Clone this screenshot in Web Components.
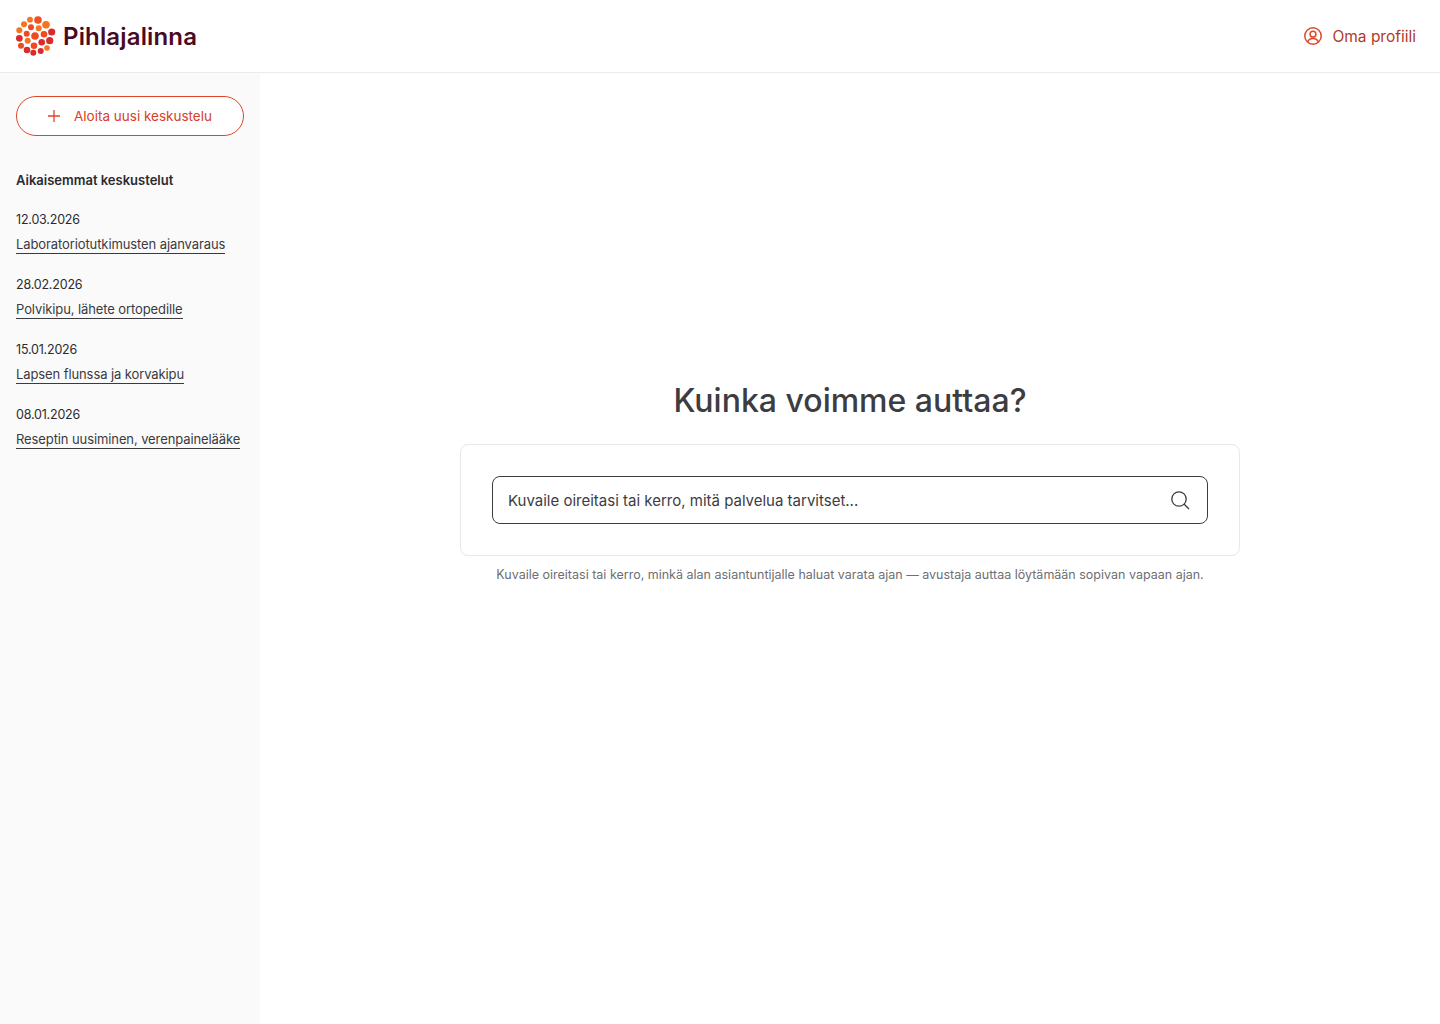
<!DOCTYPE html>
<html lang="fi">
<head>
<meta charset="utf-8">
<title>Pihlajalinna</title>
<style>
html, body { margin:0; height:100%; }
body { font-family:"Inter","Liberation Sans",sans-serif; color:#2b2b30; background:#fff; }
</style>
</head>
<body>
<app-shell>
  <site-header slot="head"></site-header>
  <chat-history slot="side"></chat-history>
  <search-panel slot="main"></search-panel>
</app-shell>

<script>
const FONT = `"Inter","Liberation Sans",sans-serif`

const dots = [
  [22,4,3.8,'#f04e23'],[14,3.7,2.9,'#f6731f'],[8,8.3,3,'#f6731f'],[30,8.7,3.8,'#f6731f'],
  [15,11.3,3,'#ee4a24'],[22.7,12.3,3,'#f6731f'],[3.3,14.3,3,'#f6731f'],[10.7,17.7,3,'#ee4a24'],
  [19,20,3.8,'#ee4a24'],[28,18.3,3.3,'#ee4a24'],[35.7,16,3.6,'#d92b2b'],[3.3,22.3,3.4,'#d92b2b'],
  [11.7,24.7,3,'#f6731f'],[25.7,26.3,3.3,'#d92b2b'],[33.7,24.7,3.6,'#d92b2b'],[5,29.7,3,'#ee4a24'],
  [18,29.7,3.3,'#ee4a24'],[31,32,2.8,'#f6731f'],[11,34,3.3,'#d92b2b'],[24.7,35,3,'#d92b2b'],[17.3,36.7,3,'#d92b2b']
]

customElements.define('app-shell', class extends HTMLElement {
  constructor() {
    super()
    this.attachShadow({ mode: 'open' }).innerHTML = `
    <style>
    :host { display:flex; flex-direction:column; height:1024px; overflow:hidden; }
    .body { flex:1; display:flex; min-height:0; }
    .side { width:260px; flex:none; background:#fafafa; }
    .main { flex:1; }
    </style>
    <slot name="head"></slot>
    <div class="body">
      <div class="side"><slot name="side"></slot></div>
      <div class="main"><slot name="main"></slot></div>
    </div>`
  }
})

customElements.define('site-header', class extends HTMLElement {
  constructor() {
    super()
    const circles = dots.map(d => `<circle cx="${d[0]}" cy="${d[1]}" r="${d[2]}" fill="${d[3]}"/>`).join('')
    this.attachShadow({ mode: 'open' }).innerHTML = `
    <style>
    :host { display:flex; align-items:center; justify-content:space-between; height:72px; padding:0 24px 0 16px; border-bottom:1px solid #ebebeb; background:#fff; font-family:${FONT}; }
    .logo { display:flex; align-items:center; gap:7px; }
    .name { font-size:24px; font-weight:600; color:#4a0a24; line-height:40px; padding-top:2px; letter-spacing:.15px; }
    .profile { display:flex; align-items:center; gap:9px; color:#b23a24; font-size:15.5px; font-weight:400; }
    svg { display:block; }
    </style>
    <div class="logo">
      <svg width="40" height="40" viewBox="0 0 40 40">${circles}</svg>
      <span class="name">Pihlajalinna</span>
    </div>
    <div class="profile">
      <svg width="20" height="20" viewBox="0 0 20 20" fill="none" stroke="#dc4a2c" stroke-width="1.5">
        <circle cx="10" cy="10" r="8.2"/>
        <circle cx="10" cy="8.2" r="2.9"/>
        <path d="M4.6 16c.9-2.4 2.9-3.6 5.4-3.6s4.500 1.200 5.400 3.600"/>
      </svg>
      <span>Oma profiili</span>
    </div>`
  }
})

customElements.define('new-chat-button', class extends HTMLElement {
  constructor() {
    super()
    this.attachShadow({ mode: 'open' }).innerHTML = `
    <style>
    :host { display:flex; align-items:center; justify-content:center; gap:14px; height:38px; border:1px solid #e0452a; border-radius:20px; color:#d8402a; font-size:13.5px; background:#fff; font-family:${FONT}; }
    svg { display:block; }
    </style>
    <svg width="12" height="12" viewBox="0 0 12 12" stroke="#e0452a" stroke-width="1.300" fill="none"><path d="M6 0v12M0 6h12"/></svg>
    <span><slot></slot></span>`
  }
})

customElements.define('history-item', class extends HTMLElement {
  constructor() {
    super()
    this.attachShadow({ mode: 'open' }).innerHTML = `
    <style>
    :host { display:block; height:65px; font-family:${FONT}; }
    .date { font-size:12.5px; line-height:20px; color:#2b2b30; letter-spacing:-.2px; }
    .link { display:inline-block; margin-top:5px; font-size:13px; line-height:18px; color:#3a3a40; border-bottom:1px solid #3a3a40; letter-spacing:-.1px; }
    </style>
    <div class="date"><slot name="date"></slot></div>
    <span class="link"><slot></slot></span>`
  }
})

customElements.define('chat-history', class extends HTMLElement {
  constructor() {
    super()
    const items = [
      ['12.03.2026', 'Laboratoriotutkimusten ajanvaraus'],
      ['28.02.2026', 'Polvikipu, lähete ortopedille'],
      ['15.01.2026', 'Lapsen flunssa ja korvakipu'],
      ['08.01.2026', 'Reseptin uusiminen, verenpainelääke']
    ]
    this.attachShadow({ mode: 'open' }).innerHTML = `
    <style>
    :host { display:block; padding:23px 16px 0; font-family:${FONT}; }
    h2 { margin:34px 0 20px; font-size:13px; line-height:20px; font-weight:600; color:#2b2b30; }
    </style>
    <new-chat-button>Aloita uusi keskustelu</new-chat-button>
    <h2>Aikaisemmat keskustelut</h2>
    ${items.map(i => `<history-item><span slot="date">${i[0]}</span>${i[1]}</history-item>`).join('')}`
  }
})

customElements.define('search-panel', class extends HTMLElement {
  constructor() {
    super()
    this.attachShadow({ mode: 'open' }).innerHTML = `
    <style>
    :host { display:flex; flex-direction:column; align-items:center; padding-top:305px; font-family:${FONT}; }
    h1 { margin:0 0 20px; font-size:32px; line-height:46px; font-weight:500; color:#3c3c41; }
    .card { box-sizing:border-box; width:780px; height:112px; padding:31px; border:1px solid #e8e8e8; border-radius:8px; }
    .box { box-sizing:border-box; height:48px; display:flex; align-items:center; justify-content:space-between; padding:0 17px 0 15px; border:1px solid #3c3c41; border-radius:8px; font-size:15px; color:#3c3c41; }
    .hint { margin-top:9px; font-size:12.5px; line-height:20px; color:#6e6e73; }
    svg { display:block; }
    </style>
    <h1>Kuinka voimme auttaa?</h1>
    <div class="card">
      <div class="box">
        <span>Kuvaile oireitasi tai kerro, mitä palvelua tarvitset...</span>
        <svg width="20" height="20" viewBox="0 0 20 20" fill="none" stroke="#3c3c41" stroke-width="1.300">
          <circle cx="9" cy="9" r="7.200"/><path d="M14.200 14.200L19 19"/>
        </svg>
      </div>
    </div>
    <div class="hint">Kuvaile oireitasi tai kerro, minkä alan asiantuntijalle haluat varata ajan — avustaja auttaa löytämään sopivan vapaan ajan.</div>`
  }
})
</script>
</body>
</html>
